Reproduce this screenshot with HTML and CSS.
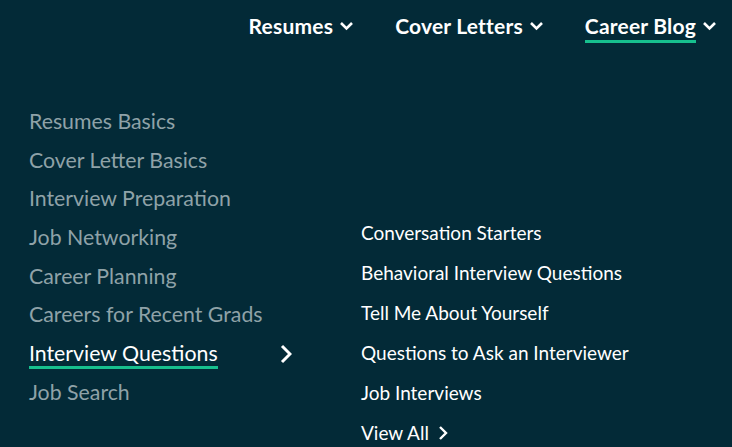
FILE: index.html
```html
<!DOCTYPE html>
<html>
<head>
<meta charset="utf-8">
<link rel="stylesheet" href="styles.css">
</head>
<body>
<header class="topnav">
  <a class="nav-item">Resumes <svg class="chev" viewBox="0 0 14 10" width="15" height="10"><path d="M1.5 2 L7 7.5 L12.5 2" fill="none" stroke="#fff" stroke-width="2.6"/></svg></a>
  <a class="nav-item">Cover Letters <svg class="chev" viewBox="0 0 14 10" width="15" height="10"><path d="M1.5 2 L7 7.5 L12.5 2" fill="none" stroke="#fff" stroke-width="2.6"/></svg></a>
  <a class="nav-item active"><span class="label">Career Blog</span> <svg class="chev" viewBox="0 0 14 10" width="15" height="10"><path d="M1.5 2 L7 7.5 L12.5 2" fill="none" stroke="#fff" stroke-width="2.6"/></svg></a>
</header>
<div class="mega">
  <ul class="cats">
    <li>Resumes Basics</li>
    <li>Cover Letter Basics</li>
    <li>Interview Preparation</li>
    <li>Job Networking</li>
    <li>Career Planning</li>
    <li>Careers for Recent Grads</li>
    <li class="current"><span class="label">Interview Questions</span><svg class="arrow" viewBox="0 0 12 20" width="12" height="20"><path d="M2 2 L10 10 L2 18" fill="none" stroke="#fff" stroke-width="3"/></svg></li>
    <li>Job Search</li>
  </ul>
  <ul class="subs">
    <li>Conversation Starters</li>
    <li>Behavioral Interview Questions</li>
    <li>Tell Me About Yourself</li>
    <li>Questions to Ask an Interviewer</li>
    <li>Job Interviews</li>
    <li class="viewall">View All <svg viewBox="0 0 10 16" width="10" height="16"><path d="M2 2 L8 8 L2 14" fill="none" stroke="#fff" stroke-width="2.4"/></svg></li>
  </ul>
</div>
</body>
</html>
```
FILE: styles.css
```css
html, body {
  margin: 0;
  padding: 0;
  background: #032a37;
  height: 100%;
  overflow: hidden;
}
body {
  font-family: Lato, "Open Sans", sans-serif;
  color: #fff;
}
.topnav {
  display: flex;
  justify-content: flex-end;
  gap: 41px;
  padding: 7px 15px 0 0;
  height: 44px;
  box-sizing: border-box;
}
.nav-item {
  font-weight: 700;
  font-size: 21px;
  letter-spacing: 0.2px;
  line-height: 26px;
  display: flex;
  align-items: center;
  gap: 6px;
  color: #fff;
}
.nav-item.active .label {
  box-shadow: inset 0 -3px 0 #17c08e;
  padding-bottom: 4px;
  margin-top: 4px;
}
.chev { display: block; }
.mega {
  display: flex;
  padding: 64px 0 0 29px;
}
ul { list-style: none; margin: 0; padding: 0; }
.cats {
  width: 263px;
  margin-right: 69px;
}
.cats li {
  font-size: 21.3px;
  line-height: 27px;
  height: 38.7px;
  color: #8fa2a8;
  display: flex;
  justify-content: space-between;
  align-items: flex-start;
}
.cats li.current { color: #fff; }
.cats li.current .label {
  border-bottom: 3px solid #17c08e;
  line-height: 26px;
}
.cats .arrow { margin-top: 4px; }
.subs {
  margin-top: 113px;
}
.subs li {
  font-size: 19px;
  line-height: 24px;
  height: 40px;
  color: #fff;
}
.subs .viewall svg { vertical-align: -1px; margin-left: 4px; }
```
